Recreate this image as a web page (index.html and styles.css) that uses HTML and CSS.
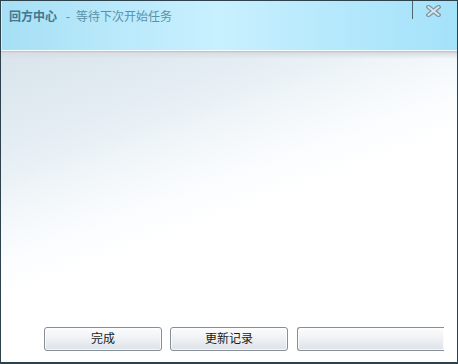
FILE: index.html
```html
<!DOCTYPE html>
<html lang="zh-CN">
  <head>
    <meta charset="utf-8">
    <title>回方中心</title>
    <link rel="stylesheet" href="styles.css">
  </head>
  <body>
    <div class="window">
      <div class="titlebar">
        <div class="title"><b>回方中心</b><span class="dash">-</span>等待下次开始任务</div>
        <div class="close">
          <svg width="15" height="12" viewBox="0 0 15 12">
            <path d="M2.5 2 L12.5 10 M12.5 2 L2.5 10" stroke="#7f97a3" stroke-width="4.4" stroke-linecap="square"/>
            <path d="M2.5 2 L12.5 10 M12.5 2 L2.5 10" stroke="#d6e9f0" stroke-width="1.8" stroke-linecap="square"/>
          </svg>
        </div>
      </div>
      <div class="content"></div>
      <div class="footer">
        <div class="btn">完成</div>
        <div class="btn">更新记录</div>
        <div class="btn btn-cut"></div>
      </div>
    </div>
  </body>
</html>
```

FILE: styles.css
```css
html,body,div{
  margin:0;
  padding:0;
}
body{
  width:458px;
  height:364px;
  overflow:hidden;
  font-family:"Liberation Sans","Noto Sans CJK SC",sans-serif;
  font-size:12px;
}
.window{
  box-sizing:border-box;
  width:458px;
  height:364px;
  display:flex;
  flex-direction:column;
  border:1px solid #2e424d;
  border-bottom-width:2px;
  background-color:#fff;
}
.titlebar{
  display:flex;
  justify-content:space-between;
  height:49px;
  flex:none;
  border-bottom:1px solid #f2fbff;
  background:linear-gradient(to right,#a6dff4 0%,#b9e9fb 25%,#c8f0ff 48%,#b4e8fc 75%,#a4e2fa 100%);
  box-shadow:inset 1px 0 0 #cdeefa;
}
.title{
  padding:8px 0 0 8px;
  line-height:16px;
  color:#5a92a8;
}
.title b{
  color:#3f7890;
}
.title .dash{
  padding:0 6px 0 9px;
}
.close{
  display:flex;
  justify-content:center;
  align-items:flex-start;
  box-sizing:border-box;
  width:45px;
  height:18px;
  padding:4px 4px 0 0;
  border-left:1px solid #4f6570;
}
.content{
  flex:1;
  background:
    linear-gradient(to bottom,#b9bec2 0,#d9dee2 2px,rgba(225,231,236,0) 8px),
    linear-gradient(160deg,#d8e3eb 0%,#e4edf3 22%,#f8fbfd 44%,#fff 56%);
}
.footer{
  display:flex;
  gap:8px;
  padding:0 0 11px 43px;
}
.btn{
  box-sizing:border-box;
  width:118px;
  height:24px;
  line-height:22px;
  text-align:center;
  color:#1a1a1a;
  border:1px solid #868f97;
  border-radius:3px;
  background:linear-gradient(to bottom,#fbfcfd 0%,#eef1f4 50%,#dde2e7 100%);
  box-shadow:inset 0 0 0 1px rgba(255,255,255,.7);
}
.btn-cut{
  width:147px;
  margin-left:1px;
  border-right:none;
  border-radius:3px 0 0 3px;
}
```
